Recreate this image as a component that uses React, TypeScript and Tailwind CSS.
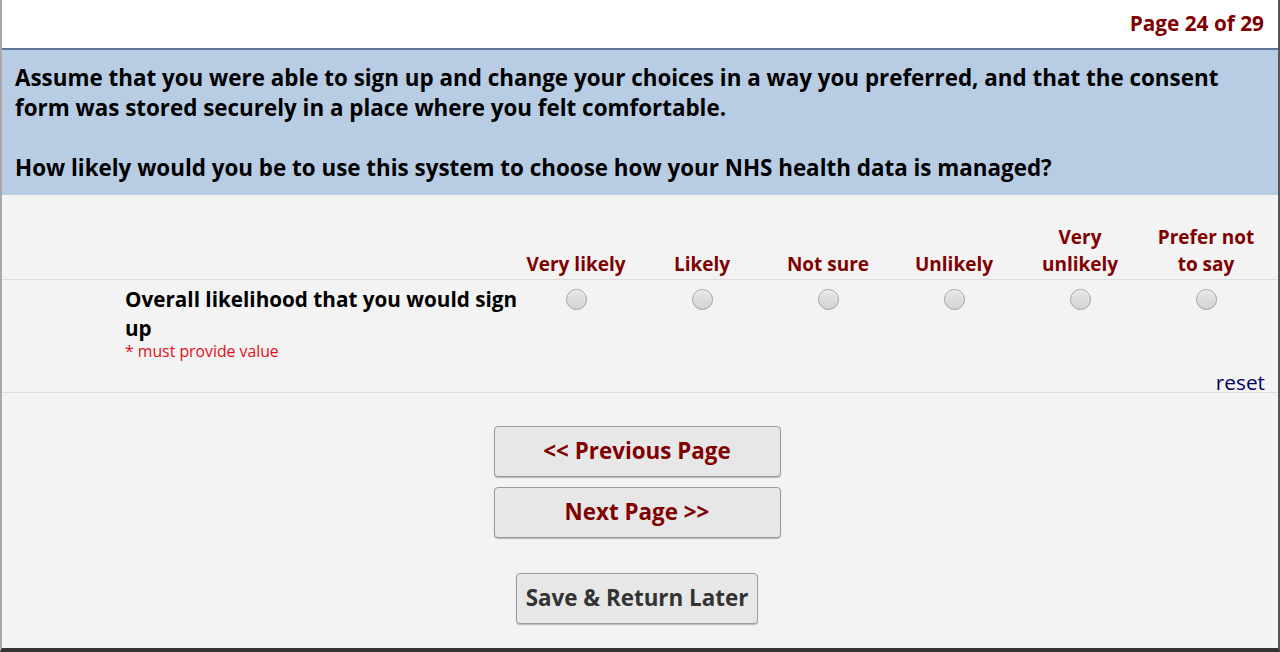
import React from "react";

const choices: { key: string; label: React.ReactNode }[] = [
  { key: "1", label: "Very likely" },
  { key: "2", label: "Likely" },
  { key: "3", label: "Not sure" },
  { key: "4", label: "Unlikely" },
  { key: "5", label: <>Very<br />unlikely</> },
  { key: "6", label: <>Prefer not<br />to say</> },
];

function Radio() {
  return (
    <span className="block h-[21px] w-[21px] rounded-full border border-[#a0a0a0] bg-gradient-to-b from-[#e6e6e6] to-[#d4d4d4] shadow-[inset_0_1px_1px_rgba(255,255,255,0.8)]" />
  );
}

function NavButton({ children, dark }: { children: React.ReactNode; dark?: boolean }) {
  return (
    <button
      className={
        "rounded-[4px] border border-[#9c9c9c] bg-[#e7e7e7] text-[22.4px] font-bold leading-none shadow-[0_1px_1px_rgba(0,0,0,0.25)] " +
        (dark ? "text-[#333333]" : "text-[#800000]")
      }
    >
      {children}
    </button>
  );
}

export default function App() {
  return (
    <div
      className="flex h-[652px] w-[1280px] flex-col overflow-hidden border-b-[4px] border-l-2 border-r-2 border-b-[#333333] border-l-[#a8a8a8] border-r-[#555555] bg-[#f3f3f3]"
      style={{ fontFamily: '"Open Sans", "Noto Sans", sans-serif' }}
    >
      {/* page counter */}
      <div className="flex h-[48px] shrink-0 justify-end bg-white pr-[14px] pt-[9px]">
        <span className="text-[20.8px] font-bold leading-[28px] text-[#800000]">Page 24 of 29</span>
      </div>
      <div className="h-[2px] shrink-0 bg-[#5f7595]" />

      {/* question */}
      <div className="shrink-0 bg-[#b8cce4] px-[13px] pb-[12px] pt-[13px] text-[22.4px] font-bold leading-[30px] text-black">
        <p>
          Assume that you were able to sign up and change your choices in a way you preferred, and that the consent
          form was stored securely in a place where you felt comfortable.
        </p>
        <p className="mt-[30px]">How likely would you be to use this system to choose how your NHS health data is managed?</p>
      </div>

      {/* matrix header */}
      <div className="flex h-[85px] shrink-0 items-end border-b border-[#dcdcdc] pb-[1px]">
        <div className="w-[511px] shrink-0" />
        {choices.map((c) => (
          <div
            key={c.key}
            className="w-[126px] shrink-0 text-center text-[19px] font-bold leading-[27px] text-[#800000]"
          >
            {c.label}
          </div>
        ))}
      </div>

      {/* matrix row */}
      <div className="shrink-0 border-b border-[#dcdcdc]">
        <div className="flex pt-[5px]">
          <div className="w-[511px] shrink-0 pl-[123px]">
            <div className="w-[400px] text-[20.7px] font-bold leading-[29px] text-black">
              Overall likelihood that you would sign up
            </div>
            <div className="text-[15.8px] leading-[16px] text-[#e0101b]">* must provide value</div>
          </div>
          {choices.map((c) => (
            <div key={c.key} className="flex w-[126px] shrink-0 justify-center pt-[4px]">
              <Radio />
            </div>
          ))}
        </div>
        <div className="flex justify-end pr-[13px] pt-[13px]">
          <span className="text-[20.8px] leading-[20px] text-[#000066]">reset</span>
        </div>
      </div>

      {/* navigation */}
      <div className="flex flex-col items-center pr-[6px] pt-[33px]">
        <div className="flex w-[287px] flex-col gap-[10px]">
          <NavButton>
            <span className="flex h-[49px] items-center justify-center">&lt;&lt; Previous Page</span>
          </NavButton>
          <NavButton>
            <span className="flex h-[49px] items-center justify-center">Next Page &gt;&gt;</span>
          </NavButton>
        </div>
        <div className="mt-[35px]">
          <NavButton dark>
            <span className="flex h-[49px] w-[240px] items-center justify-center">Save &amp; Return Later</span>
          </NavButton>
        </div>
      </div>
    </div>
  );
}
